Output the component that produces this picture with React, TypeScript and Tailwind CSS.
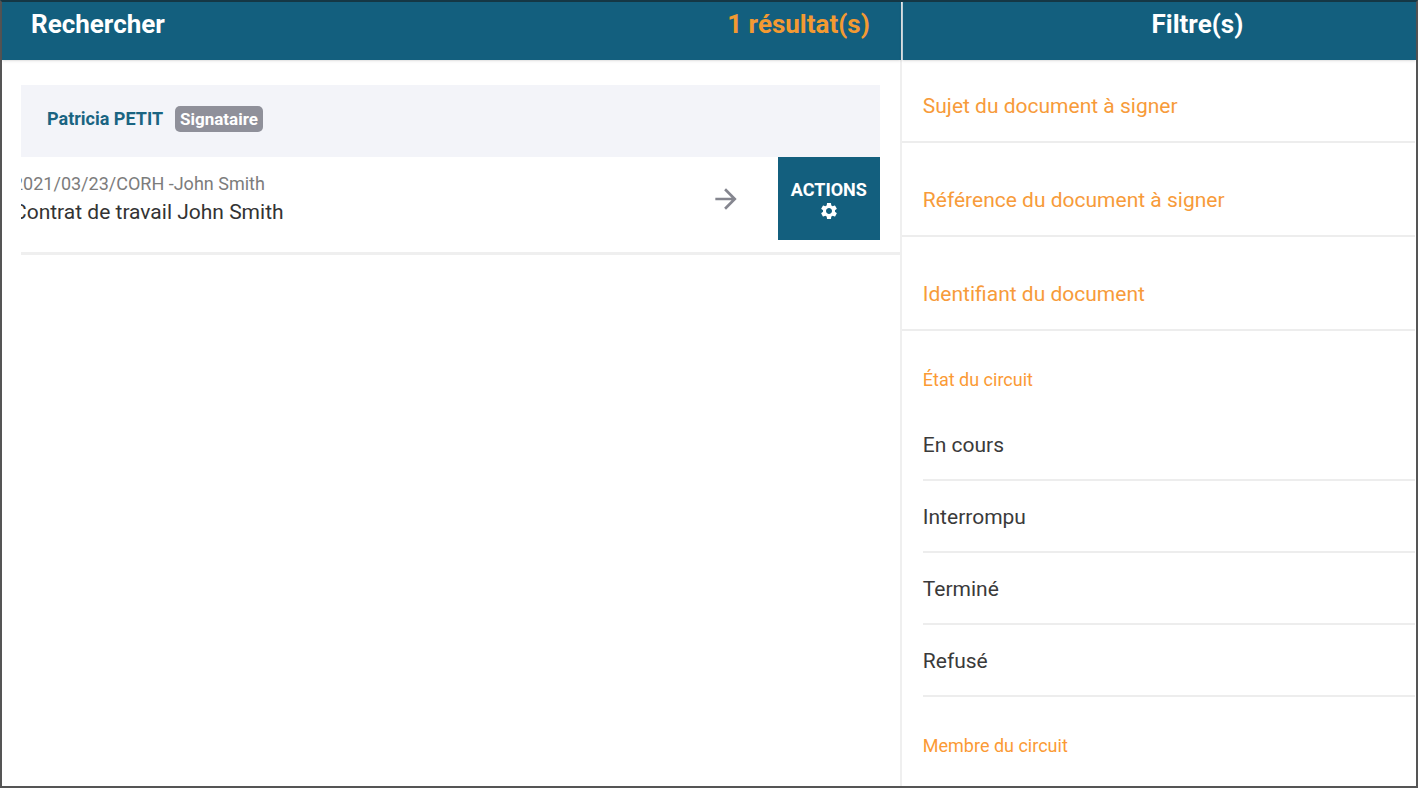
import { MdArrowForward, MdSettings } from "react-icons/md";

const textFilters = [
  { id: "subject", label: "Sujet du document à signer" },
  { id: "reference", label: "Référence du document à signer" },
  { id: "identifier", label: "Identifiant du document" },
];

const states = ["En cours", "Interrompu", "Terminé", "Refusé"];

function ResultsPanel() {
  return (
    <main className="flex flex-col border-r-2 border-[#efefef]">
      <header className="-mr-px flex h-[58px] items-start justify-between bg-[#135f7e] pt-1 pr-[31px] pl-[29px] text-[26px] leading-9 font-bold shadow-sm">
        <h1 className="text-white">Rechercher</h1>
        <p className="text-[#f39a32]">1 résultat(s)</p>
      </header>
      <section className="mt-[25px] ml-[19px] border-b-[3px] border-[#efefef] pb-3">
        <div className="mr-5 flex h-[72px] items-center gap-3 bg-[#f3f4f9] pb-1 pl-[26px]">
          <h2 className="text-lg leading-6 font-bold text-[#1a6482]">Patricia PETIT</h2>
          <span className="rounded-[5px] bg-[#8f909a] px-[5px] text-[17px] leading-[26px] font-bold text-white">
            Signataire
          </span>
        </div>
        <article className="mr-5 flex h-[83px] items-stretch">
          <div className="min-w-0 flex-1 overflow-hidden pt-[13px]">
            <p className="-ml-2 text-lg leading-7 whitespace-nowrap text-[#7c7c7c]">
              2021/03/23/CORH -John Smith
            </p>
            <p className="-ml-2 text-[21px] leading-7 whitespace-nowrap text-[#333333]">
              Contrat de travail John Smith
            </p>
          </div>
          <button type="button" aria-label="Ouvrir" className="mr-9 text-[#85868f]">
            <MdArrowForward size={32} />
          </button>
          <button
            type="button"
            className="flex w-[102px] flex-col items-center justify-center bg-[#135f7e] pt-[2px] text-lg leading-[22px] font-bold text-white"
          >
            ACTIONS
            <MdSettings size={20} />
          </button>
        </article>
      </section>
    </main>
  );
}

function FiltersPanel() {
  return (
    <aside className="flex flex-col">
      <header className="h-[58px] border-l border-[#b9d0da] bg-[#135f7e] pt-1 pl-[76px] text-center text-[26px] leading-9 font-bold text-white shadow-sm">
        <h2>Filtre(s)</h2>
      </header>
      <form className="mr-px">
        <div className="flex flex-col gap-[11px]">
          {textFilters.map((filter) => (
            <div
              key={filter.id}
              className="flex border-b-2 border-[#ededed] pt-8 pb-[21px] pl-[21px] text-[21px] leading-7"
            >
              <label htmlFor={filter.id} className="text-[#f79b3a]">
                {filter.label}
              </label>
              <input id={filter.id} type="text" className="min-w-0 flex-1 pl-2 text-[#333333] outline-none" />
            </div>
          ))}
        </div>
        <div className="pl-[21px]">
          <h3 className="pt-[35px] pb-[15px] text-lg leading-7 text-[#fb9a35]">État du circuit</h3>
          <ul>
            {states.map((state) => (
              <li key={state} className="border-b-2 border-[#ededed]">
                <button type="button" className="block h-[70px] w-full pt-1 text-left text-[21px] text-[#3a3a3a]">
                  {state}
                </button>
              </li>
            ))}
          </ul>
          <h3 className="pt-[35px] pb-[15px] text-lg leading-7 text-[#fb9a35]">Membre du circuit</h3>
        </div>
      </form>
    </aside>
  );
}

export default function App() {
  return (
    <div className="grid min-h-screen grid-cols-[7fr_4fr] border-2 border-t-[#163846] border-r-[#555555] border-b-[#555555] border-l-[#555555] bg-white font-['Roboto',sans-serif]">
      <ResultsPanel />
      <FiltersPanel />
    </div>
  );
}
